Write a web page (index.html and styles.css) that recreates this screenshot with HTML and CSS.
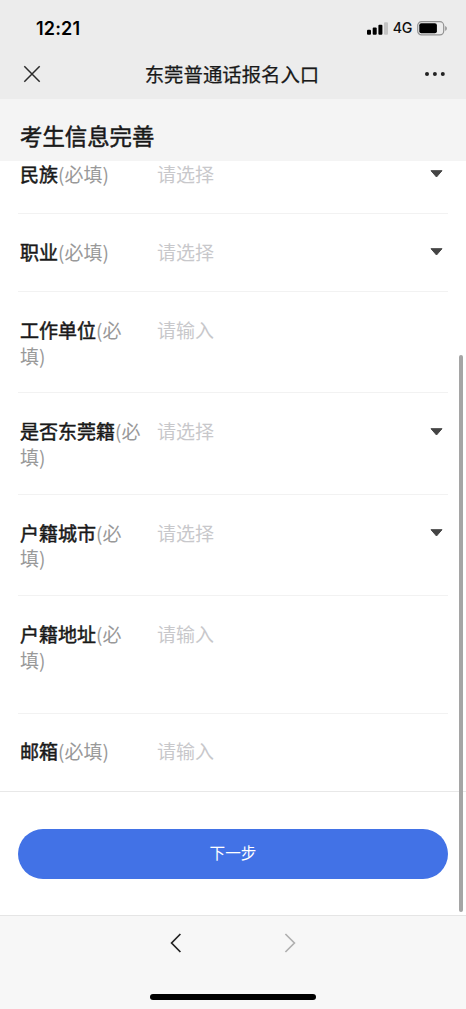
FILE: index.html
```html
<!DOCTYPE html>
<html lang="zh-CN">
<head>
<meta charset="utf-8">
<title>东莞普通话报名入口</title>
<link rel="stylesheet" href="styles.css">
</head>
<body>
<div class="phone">
  <header class="top">
    <div class="status">
      <span class="time">12:21</span>
      <div class="indicators">
        <svg class="signal" width="21" height="13" viewBox="0 0 21 13">
          <rect x="0" y="7.7" width="4" height="5" rx="1"/>
          <rect x="5.7" y="5.5" width="4" height="7.2" rx="1"/>
          <rect x="11.4" y="2.8" width="4" height="9.9" rx="1"/>
          <rect x="17" y="0.2" width="4" height="12.5" rx="1" fill="#c4c4c4"/>
        </svg>
        <span class="network">4G</span>
        <svg class="battery" width="31" height="15" viewBox="0 0 31 15">
          <rect x="0.7" y="0.7" width="26" height="13.2" rx="3.8" fill="none" stroke="#929292" stroke-width="1.2"/>
          <rect x="2.3" y="2.3" width="17.6" height="10" rx="2"/>
          <path d="M28.2 5v4.8c1-.4 1.6-1.3 1.6-2.4S29.200 5.400 28.200 5z" fill="#929292"/>
        </svg>
      </div>
    </div>
    <div class="navbar">
      <svg class="close" width="18" height="18" viewBox="0 0 18 18"><path d="M1.300 1.300 16.700 16.700M16.700 1.300 1.300 16.700"/></svg>
      <h1 class="title">东莞普通话报名入口</h1>
      <svg class="more" width="22" height="6" viewBox="0 0 22 6"><circle cx="3" cy="3" r="2"/><circle cx="10.900" cy="3" r="2"/><circle cx="18.800" cy="3" r="2"/></svg>
    </div>
  </header>
  <h2 class="section">考生信息完善</h2>
  <main class="form">
    <div class="row first"><label class="label"><b>民族</b>(必填)</label><span class="value">请选择</span><svg class="arrow" width="13" height="8" viewBox="0 0 13 8"><path d="M1 .7h11L6.500 7z"/></svg></div>
    <div class="row"><label class="label"><b>职业</b>(必填)</label><span class="value">请选择</span><svg class="arrow" width="13" height="8" viewBox="0 0 13 8"><path d="M1 .7h11L6.500 7z"/></svg></div>
    <div class="row double"><label class="label"><b>工作单位</b>(必填)</label><span class="value">请输入</span></div>
    <div class="row double"><label class="label"><b>是否东莞籍</b>(必填)</label><span class="value">请选择</span><svg class="arrow" width="13" height="8" viewBox="0 0 13 8"><path d="M1 .7h11L6.500 7z"/></svg></div>
    <div class="row double"><label class="label"><b>户籍城市</b>(必填)</label><span class="value">请选择</span><svg class="arrow" width="13" height="8" viewBox="0 0 13 8"><path d="M1 .7h11L6.500 7z"/></svg></div>
    <div class="row tall"><label class="label"><b>户籍地址</b>(必填)</label><span class="value">请输入</span></div>
    <div class="row last"><label class="label"><b>邮箱</b>(必填)</label><span class="value">请输入</span></div>
  </main>
  <div class="actions"><button class="next">下一步</button></div>
  <footer class="browser">
    <div class="history">
      <svg width="12" height="20" viewBox="0 0 12 20"><path d="M10.400 1 1.600 10l8.800 9" stroke="#222"/></svg>
      <svg width="12" height="20" viewBox="0 0 12 20"><path d="M1.400 1 10.400 10l-9 9" stroke="#b0b0b0"/></svg>
    </div>
    <div class="home"></div>
  </footer>
  <div class="scrollbar"></div>
</div>
</body>
</html>
```
FILE: styles.css
```css
* { box-sizing: border-box; }
body { margin: 0; background: #fff; font-family: "Noto Sans CJK SC", sans-serif; color: #191919; }
.phone { position: relative; width: 466px; height: 1009px; display: flex; flex-direction: column; overflow: hidden; }
svg { display: block; flex: none; }
.top { height: 99px; flex: none; background: #ececec; }
.status { height: 50px; padding: 6px 18px 0 36px; display: flex; justify-content: space-between; align-items: center; }
.time { padding-top: 1px; font: 600 18px/22px Inter, sans-serif; letter-spacing: .15px; color: #000; }
.indicators { display: flex; align-items: center; }
.network { margin: 0 5px 0 5px; font: 500 14.200px/20px Inter, sans-serif; letter-spacing: -.3px; color: #111; }
.navbar { height: 49px; padding: 0 20px 2px 23px; display: flex; align-items: center; justify-content: space-between; }
.close { fill: none; stroke: #2b2b2b; stroke-width: 1.500; }
.title { margin: 0 1px 0 0; font-size: 19.400px; line-height: 28px; font-weight: 400; -webkit-text-stroke: .25px; }
.more { fill: #222; }
.section { margin: 0; flex: none; height: 62px; padding: 11px 20px 0; background: #f4f4f4; font-size: 22.400px; line-height: 50px; font-weight: 400; -webkit-text-stroke: .5px; }
.form { flex: none; border-bottom: 1px solid #e8e8e8; }
.row { height: 78px; margin: 0 18px; padding: 25px 5px 0 2px; display: flex; align-items: flex-start; border-bottom: 1px solid #f2f2f2; font-size: 19px; line-height: 25.500px; }
.row.first { height: 53px; padding-top: 0; }
.row.double { height: 101.450px; }
.row.tall { height: 117.200px; }
.row.last { height: 77.400px; padding-top: 24.600px; border-bottom: 0; }
.label { width: 124px; margin-right: 13px; color: #999; }
.label b { font-weight: 400; color: #191919; -webkit-text-stroke: .5px; }
.value { flex: 1; color: #c8c8cb; font-weight: 400; }
.arrow { margin-top: 9.200px; fill: #444; stroke: #444; stroke-width: 1; stroke-linejoin: round; }
.actions { flex: 1; padding: 37px 18px 0; }
.next { display: block; width: 430px; height: 50px; padding: 0 0 3px; border: 0; border-radius: 25px; background: #4272e6; color: #fff; font: 400 15.600px/24px "Noto Sans CJK SC", sans-serif; }
.browser { flex: none; height: 94px; padding-top: 17px; background: #f7f7f7; border-top: 1px solid #e5e5e5; display: flex; flex-direction: column; align-items: center; }
.history { display: flex; gap: 102px; }
.history path { fill: none; stroke-width: 1.700; }
.home { width: 166px; height: 6px; margin-top: 41px; border-radius: 3px; background: #000; }
.scrollbar { position: absolute; left: 459px; top: 355px; width: 4px; height: 557px; border-radius: 2px; background: #a5a5a5; }
```
